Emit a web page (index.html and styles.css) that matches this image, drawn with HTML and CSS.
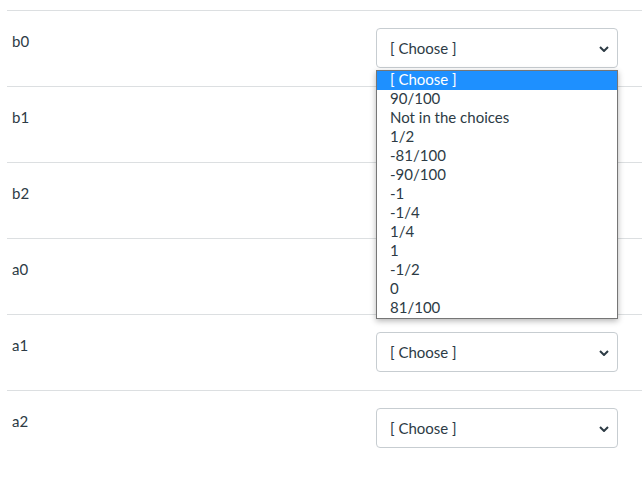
FILE: index.html
```html
<!DOCTYPE html>
<html>
<head>
<meta charset="utf-8">
<link rel="stylesheet" href="styles.css">
</head>
<body>
<div class="list">
  <div class="row">
    <div class="label">b0</div>
    <div class="field">
      <div class="select"><span>[ Choose ]</span><svg class="chev" width="10" height="6" viewBox="0 0 10 6"><path d="M1 1 L5 5 L9 1" fill="none" stroke="#2d3b45" stroke-width="2"/></svg></div>
      <div class="popup">
        <div class="opt sel">[ Choose ]</div>
        <div class="opt">90/100</div>
        <div class="opt">Not in the choices</div>
        <div class="opt">1/2</div>
        <div class="opt">-81/100</div>
        <div class="opt">-90/100</div>
        <div class="opt">-1</div>
        <div class="opt">-1/4</div>
        <div class="opt">1/4</div>
        <div class="opt">1</div>
        <div class="opt">-1/2</div>
        <div class="opt">0</div>
        <div class="opt">81/100</div>
      </div>
    </div>
  </div>
  <div class="row">
    <div class="label">b1</div>
    <div class="field"><div class="select"><span>[ Choose ]</span><svg class="chev" width="10" height="6" viewBox="0 0 10 6"><path d="M1 1 L5 5 L9 1" fill="none" stroke="#2d3b45" stroke-width="2"/></svg></div></div>
  </div>
  <div class="row">
    <div class="label">b2</div>
    <div class="field"><div class="select"><span>[ Choose ]</span><svg class="chev" width="10" height="6" viewBox="0 0 10 6"><path d="M1 1 L5 5 L9 1" fill="none" stroke="#2d3b45" stroke-width="2"/></svg></div></div>
  </div>
  <div class="row">
    <div class="label">a0</div>
    <div class="field"><div class="select"><span>[ Choose ]</span><svg class="chev" width="10" height="6" viewBox="0 0 10 6"><path d="M1 1 L5 5 L9 1" fill="none" stroke="#2d3b45" stroke-width="2"/></svg></div></div>
  </div>
  <div class="row">
    <div class="label">a1</div>
    <div class="field"><div class="select"><span>[ Choose ]</span><svg class="chev" width="10" height="6" viewBox="0 0 10 6"><path d="M1 1 L5 5 L9 1" fill="none" stroke="#2d3b45" stroke-width="2"/></svg></div></div>
  </div>
  <div class="row">
    <div class="label">a2</div>
    <div class="field"><div class="select"><span>[ Choose ]</span><svg class="chev" width="10" height="6" viewBox="0 0 10 6"><path d="M1 1 L5 5 L9 1" fill="none" stroke="#2d3b45" stroke-width="2"/></svg></div></div>
  </div>
</div>
</body>
</html>
```
FILE: styles.css
```css
html, body {
  margin: 0;
  padding: 0;
  background: #fff;
}
body {
  font-family: Lato, "Open Sans", sans-serif;
  font-size: 15px;
  color: #2d3b45;
}
.list {
  padding-top: 10px;
  padding-left: 7px;
}
.row {
  display: flex;
  justify-content: space-between;
  border-top: 1px solid #dcdfe1;
  padding: 17px 0 18px 0;
  height: 40px;
}
.label {
  padding-left: 5px;
  padding-top: 3px;
  line-height: 20px;
  font-size: 15px;
}
.field {
  position: relative;
  width: 242px;
  margin-right: 24px;
}
.select {
  box-sizing: border-box;
  height: 40px;
  border: 1px solid #c7cdd1;
  border-radius: 4px;
  display: flex;
  align-items: center;
  justify-content: space-between;
  padding: 0 8px 1px 13px;
  font-size: 15px;
}
.chev {
  display: block;
  margin-top: 2px;
}
.popup {
  position: absolute;
  top: 42px;
  left: 0;
  width: 242px;
  box-sizing: border-box;
  border: 1px solid #767676;
  background: #fff;
  box-shadow: 0 2px 6px rgba(0,0,0,0.3);
  z-index: 5;
}
.opt {
  height: 19px;
  line-height: 16px;
  padding-left: 13px;
  font-size: 15px;
  white-space: nowrap;
}
.opt.sel {
  background: #1e90ff;
  color: #fff;
}
```
